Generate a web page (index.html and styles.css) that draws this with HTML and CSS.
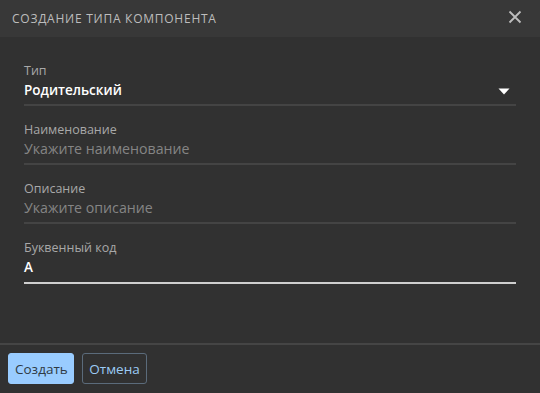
FILE: index.html
```html
<!DOCTYPE html>
<html lang="ru">
<head>
<meta charset="utf-8">
<link rel="stylesheet" href="styles.css">
</head>
<body>
<div class="dialog">
  <div class="header">
    <span class="title">Создание типа компонента</span>
    <svg class="close" width="14" height="14" viewBox="0 0 14 14"><path d="M1.5 1.5 L12.5 12.5 M12.5 1.5 L1.5 12.5" stroke="#bdbdbd" stroke-width="1.8" fill="none"/></svg>
  </div>
  <div class="body">
    <div class="field">
      <div class="label">Тип</div>
      <div class="value strong select">Родительский<svg class="caret" width="12" height="7" viewBox="0 0 12 7"><path d="M0.5 0.5 L11.5 0.5 L6 6.5 Z" fill="#ffffff"/></svg></div>
    </div>
    <div class="field">
      <div class="label">Наименование</div>
      <div class="value placeholder">Укажите наименование</div>
    </div>
    <div class="field">
      <div class="label">Описание</div>
      <div class="value placeholder">Укажите описание</div>
    </div>
    <div class="field focused">
      <div class="label">Буквенный код</div>
      <div class="value strong">А</div>
    </div>
  </div>
  <div class="footer">
    <button class="btn primary">Создать</button>
    <button class="btn secondary">Отмена</button>
  </div>
</div>
</body>
</html>
```
FILE: styles.css
```css
html, body {
  margin: 0;
  padding: 0;
  background: #313131;
}
body {
  font-family: "Open Sans", "Noto Sans", sans-serif;
  width: 540px;
  height: 393px;
  overflow: hidden;
}
.dialog {
  display: flex;
  flex-direction: column;
  height: 393px;
}
.header {
  height: 37px;
  background: #383838;
  display: flex;
  align-items: center;
  justify-content: space-between;
  padding: 0 18px 0 12px;
  flex: none;
}
.title {
  text-transform: uppercase;
  color: #bdbdbd;
  font-size: 12px;
  letter-spacing: 0.75px;
  margin-top: -1px;
}
.close {
  margin-top: -4px;
}
.body {
  flex: 1;
  padding: 26px 24px 0 24px;
  display: flex;
  flex-direction: column;
  gap: 16px;
}
.field {
  border-bottom: 2px solid #444444;
  height: 41px;
  display: flex;
  flex-direction: column;
  flex: none;
}
.field.focused {
  border-bottom-color: #cfcfcf;
  height: 42px;
}
.label {
  font-size: 12.5px;
  color: #a8a8a8;
  line-height: 16px;
}
.value {
  font-size: 14.2px;
  line-height: 22px;
  margin-top: 0;
}
.strong {
  color: #ffffff;
  font-weight: 600;
  font-size: 13.5px;
}
.placeholder {
  color: #858585;
}
.select {
  display: flex;
  align-items: center;
  justify-content: space-between;
  padding-right: 6px;
}
.caret {
  margin-top: 2px;
}
.footer {
  border-top: 2px solid #454545;
  height: 50px;
  flex: none;
  display: flex;
  align-items: flex-start;
  padding: 8px 8px 0 8px;
  gap: 8px;
  box-sizing: border-box;
}
.btn {
  font-family: "Open Sans", "Noto Sans", sans-serif;
  font-size: 13.5px;
  height: 31px;
  border-radius: 3px;
  padding: 0 6px;
  cursor: pointer;
}
.primary {
  background: #99ccff;
  color: #2f3a44;
  border: 1px solid #99ccff;
  width: 66px;
}
.secondary {
  background: transparent;
  color: #9ccbf5;
  border: 1px solid #5b6b7b;
  width: 65px;
}
```
